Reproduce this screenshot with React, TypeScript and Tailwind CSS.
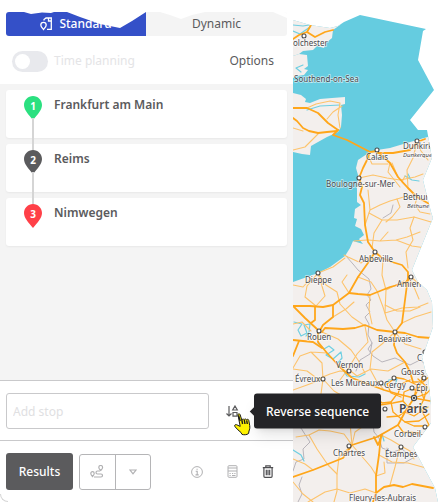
import React, { useState } from 'react';

const stops = [
  { id: 1, name: 'Frankfurt am Main', color: '#2be080' },
  { id: 2, name: 'Reims', color: '#5b5b5d' },
  { id: 3, name: 'Nimwegen', color: '#ff4048' },
];

const majorRoads = [
  // England
  'M293 108L307 108L318 113L328 123L338 130',
  'M293 118L297 121L303 128L309 131L318 133L327 132L337 131',
  'M338 130L333 135L347 140L370 152',
  'M293 39L299 35L307 32L315 37L325 32L333 30M307 32L311 25',
  // Calais and the coast
  'M370 152L377 151L382 156L390 163L398 177L408 188L417 197L433 206',
  'M377 153L393 153L410 150L417 142L425 139',
  'M370 152L367 160L363 168L359 178L362 187L360 195L364 203L365 225L368 242L375 252',
  'M375 252L370 260L358 277L349 293L333 305L323 307L310 306L293 306',
  'M349 293L358 294L370 295L390 287L405 283L411 277',
  'M375 252L382 258L392 262L402 265L408 272L408 277L405 300L402 323L395 332L394 345L397 353L405 362L410 372L413 382',
  'M395 332L405 333L418 337L431 338',
  // Rouen
  'M322 332L325 328L343 329L355 328L365 325L377 330L395 332',
  'M293 306L305 318L318 330L318 342L327 353L340 367L352 378L368 384L384 390L398 394L414 398',
  'M333 305L333 317L323 325L319 332',
  'M293 340L313 342L322 348M299 341L293 356M315 307L315 320L311 323',
  // Paris and the south
  'M293 477L313 470L333 462L343 458L352 445L377 437L398 425L405 412L414 398',
  'M381 435L379 455L376 476L376 493L384 487L394 485L403 487L412 484L433 488',
  'M376 493L373 502M374 437L378 445L382 435',
];

const minorRoads = [
  'M307 108L316 104L330 101L340 103L338 115L340 128M327 119L333 112L342 106',
  'M293 150L305 147L311 141L318 134M293 128L303 131',
  'M359 178L373 175L387 178L400 180L415 177L423 174',
  'M390 163L388 172L400 187M398 177L392 163M405 176L402 182L410 190',
  'M367 153L372 164L388 164M417 142L421 151L428 160M417 142L413 158L407 170L408 188',
  'M368 190L370 210L365 225M370 210L380 205L390 201L397 199L400 207L392 217L386 222',
  'M369 213L382 220L397 220L414 217L431 222M417 197L415 205L420 212L430 214',
  'M397 199L407 196L414 195M414 217L410 228L413 240L406 252L408 268M382 220L374 233L372 248',
  'M368 240L380 241L396 240L407 237L420 232M380 241L388 232M396 240L412 246L426 248',
  'M354 241L367 240M344 255L348 257L361 263L371 256M318 273L326 285L337 292L340 304L352 317L365 326',
  'M318 273L333 267L345 258M318 273L307 286L305 297L316 306L325 296L318 273M293 285L303 287L311 278',
  'M349 293L342 282L347 275M358 277L371 282L377 291L383 307L387 320L395 332',
  'M383 260L382 275L386 290L385 313M386 290L396 285L404 281M385 313L402 308L418 307L428 303',
  'M385 305L397 311L410 311L420 307M411 277L419 284L428 285M408 277L414 287L419 299',
  'M370 295L369 310L372 324M333 317L346 309L354 302M293 324L302 322L311 331M322 332L338 339L351 350L358 360L365 373',
  'M365 326L368 342L357 354L348 369L340 380M395 332L382 344L372 352L370 369L376 380L384 390',
  'M395 332L405 344L421 349M402 323L415 317L431 312M293 369L307 371L318 379L330 374L340 371L351 372',
  'M293 390L307 385L323 379L322 363L311 352L300 356L293 368M311 352L327 353M348 369L357 376L371 369L388 371L405 362',
  'M323 379L334 391L346 398L350 423L352 445M323 379L321 394L306 410L293 419',
  'M352 445L344 434L330 431L319 430L309 435L296 437M352 445L339 457L337 474L337 491L334 502',
  'M352 445L371 467L376 475M337 489L350 493L365 489L376 493M337 489L325 492L308 502M293 482L303 494L313 502',
  'M352 445L355 432L365 425L371 424M381 435L391 440L401 446L410 451L414 459M379 455L392 462L408 463L426 468',
  'M376 476L385 473L384 462M293 459L305 464L313 470M337 474L328 465L317 449L309 435M400 447L395 467L390 485',
];

const parisRing = [
  'M404 392L411 389L421 391L424 399L420 407L409 408L403 401Z',
  'M397 394L391 402L393 412L405 422L419 421L429 414',
  'M414 398L421 383L423 374M414 398L426 394L433 387M414 398L430 401M414 398L417 385L404 379L393 377',
  'M413 382L423 382L430 376M398 394L401 384L410 380M391 402L382 403L375 396',
  'M403 401L393 403L380 405M409 408L399 416L387 417M420 407L427 421L432 431M405 422L414 426L429 426M398 425L403 432L420 433',
  'M395 378L387 384L391 393L401 397M418 379L427 387L424 399M405 412L414 416L428 407',
];

const borders = [
  'M346 256L353 264L358 270L369 279L371 289L367 295L371 300L366 305L370 312L365 317L369 324L368 335L372 343L368 349L373 356L382 362L395 358L410 365L420 360L428 366',
  'M372 343L370 354L360 360L356 371M373 424L374 432L379 438L382 448L393 452L402 449L408 454',
  'M293 424L301 428L306 436L310 442L303 449L304 459L296 462L293 471M302 477L299 485L302 494L298 502M387 448L387 463L404 463L413 458',
  'M393 205L391 213L383 218',
];

const rivers = [
  'M294 322L302 324L298 330L301 336L307 333L304 325L310 324L309 332L306 336',
  'M318 343L324 349L329 346L334 350L326 355L333 359L341 352L342 358L337 364',
  'M343 370L347 376L359 377L365 374M384 385L389 380L397 379L394 388M293 450L301 455L304 461M382 434L384 441',
  'M293 25L303 26L315 24L326 26M293 31L300 34L310 27M307 110L320 106L340 105M293 80L303 77M303 65L296 68L301 72',
  'M405 176L412 180L419 181M408 174L410 178M373 156L380 159',
];

const towns = [
  { x: 304, y: 36 }, { x: 377, y: 150 }, { x: 417, y: 141 }, { x: 359, y: 178 }, { x: 375, y: 252 },
  { x: 318, y: 273 }, { x: 411, y: 277 }, { x: 319, y: 331 }, { x: 395, y: 332 }, { x: 349, y: 371 },
  { x: 323, y: 379 }, { x: 381, y: 383 }, { x: 394, y: 378 }, { x: 412, y: 388 }, { x: 424, y: 378 },
  { x: 349, y: 446 }, { x: 401, y: 447 }, { x: 385, y: 409 }, { x: 425, y: 427 }, { x: 425, y: 352 },
];

const labels = [
  { text: 'olchester', x: 293, y: 46 },
  { text: 'Southend-on-Sea', x: 294, y: 82 },
  { text: 'Calais', x: 366, y: 160 },
  { text: 'Dunkirk', x: 403, y: 149 },
  { text: 'Boulogne-sur-Mer', x: 326, y: 187 },
  { text: 'Bethun', x: 403, y: 200 },
  { text: 'Abbeville', x: 359, y: 262 },
  { text: 'Dieppe', x: 305, y: 283 },
  { text: 'Amien', x: 397, y: 287 },
  { text: 'Rouen', x: 307, y: 340 },
  { text: 'Beauvais', x: 378, y: 342 },
  { text: 'C', x: 417, y: 361 },
  { text: 'Vernon', x: 336, y: 368 },
  { text: 'Gouss', x: 401, y: 375 },
  { text: 'Évreux', x: 295, y: 382 },
  { text: 'Les Mureaux', x: 331, y: 386 },
  { text: 'Cergy', x: 384, y: 388 },
  { text: 'Épi', x: 416, y: 391 },
  { text: 'Corbeil-', x: 394, y: 437 },
  { text: 'Chartres', x: 333, y: 456 },
  { text: 'Étampes', x: 385, y: 457 },
  { text: 'Fleury-les-Aubrais', x: 349, y: 501 },
];

const RouteMap: React.FC = () => (
  <svg
    className="h-full w-full"
    viewBox="293 0 145 502"
    preserveAspectRatio="xMinYMin slice"
    role="img"
    aria-label="Map"
    fontFamily="'Noto Sans', sans-serif"
  >
    <defs>
      <clipPath id="torn-edge">
        <path d="M293 20L310 25L330 28L338 26L344 22L360 15L426 29L423 31L418 60L434 90L410 120L418 130L427 130L432 158L423 180L431 212L433 218L418 255L412 270L418 282L427 290L432 302L433 327L425 350L422 357L426 373L428 376L431 405L431 423L413 447L435 488L438 502H293Z" />
      </clipPath>
    </defs>
    <g clipPath="url(#torn-edge)">
      <rect x="293" width="145" height="502" fill="#65cce0" />
      <g fill="#f3efed">
        <path d="M293 10H346L340 25L333 30L332 38L326 43L324 48L317 46L313 50L303 51L299 54L293 56Z" />
        <path d="M293 56L299 54L307 55L308 66L304 69L308 70L304 75L297 76L293 78Z" />
        <path d="M293 93L301 95L306 99L305 102L310 103L320 99L332 98L345 97L345 104L341 105L342 115L341 127L338 132L327 137L318 142L311 146L310 155L302 154L293 152Z" />
        <path d="M438 134L417 140L400 145L390 148L377 150L370 152L358 160L356 168L358 175L357 185L357 202L361 205L355 209L354 218L357 219L355 226L361 229L364 235L359 239L363 244L353 241L350 248L345 256L330 267L318 273L307 277L293 282V502H438Z" />
      </g>
      <g fill="none" strokeLinejoin="round" strokeLinecap="round">
        <g stroke="#b9b5bb" strokeWidth="1">
          {borders.map((d) => <path key={d} d={d} />)}
        </g>
        <g stroke="#6fcfe2" strokeWidth="1.2">
          {rivers.map((d) => <path key={d} d={d} />)}
        </g>
        <g stroke="#fdc36b" strokeWidth="1.1">
          {minorRoads.map((d) => <path key={d} d={d} />)}
        </g>
        <g stroke="#ffa61a" strokeWidth="1.8">
          {majorRoads.map((d) => <path key={d} d={d} />)}
        </g>
        <g stroke="#ffa61a" strokeWidth="1.3">
          {parisRing.map((d) => <path key={d} d={d} />)}
        </g>
      </g>
      <g fill="#fff" stroke="#4a4a4a" strokeWidth="1.1">
        {towns.map((t) => <circle key={`${t.x}-${t.y}`} cx={t.x} cy={t.y} r="2" />)}
        <circle cx="414" cy="398" r="2.6" />
        <circle cx="414" cy="398" r="0.8" />
      </g>
      <g
        fill="#48484d"
        stroke="#fff"
        strokeOpacity="0.6"
        strokeWidth="1.5"
        paintOrder="stroke"
        fontSize="8"
      >
        {labels.map((l) => <text key={l.text} x={l.x} y={l.y}>{l.text}</text>)}
        <text x="403" y="157" fontSize="6" fontStyle="italic">Dunkerque</text>
        <text x="407" y="208" fontSize="6" fontStyle="italic">Béthune</text>
        <text x="399" y="413" fontSize="12" fontWeight="600">Paris</text>
      </g>
    </g>
  </svg>
);

const StopPin: React.FC<{ id: number; color: string }> = ({ id, color }) => (
  <div className="relative h-6 w-[18px] shrink-0">
    <svg className="absolute inset-0" width="18" height="24" viewBox="0 0 18 24" fill={color}>
      <path d="M9 0C4 0 0 4 0 9c0 5 4.500 9.500 9 15 4.500-5.500 9-10 9-15 0-5-4-9-9-9Z" />
    </svg>
    <span className="relative block text-center text-[10px] leading-5 font-bold text-white">{id}</span>
  </div>
);

const App: React.FC = () => {
  const [timePlanning, setTimePlanning] = useState(false);
  const [newStop, setNewStop] = useState('');

  return (
    <div className="flex h-screen overflow-hidden bg-white font-['Noto_Sans',sans-serif] text-xs text-[#5b5b5d]">
      <aside className="relative flex w-[293px] shrink-0 flex-col">
        <header className="h-[84px] pt-3">
          <div className="relative mx-[6px] flex h-6 overflow-hidden rounded-[3px]">
            <button className="flex w-[140px] items-center justify-center gap-[6px] bg-[#3450c8] font-medium text-white">
              <svg width="13" height="14" viewBox="0 0 13 14" fill="none" stroke="currentColor" strokeWidth="1.3">
                <path d="M4 3.500V2.500L6 1h5.300v11.300H7M8.500 1v3h3" />
                <path d="M3.500 12.500C1.800 10.500.8 9.500.8 8a2.700 2.700 0 0 1 5.400 0c0 1.500-1 2.500-2.700 4.500Z" />
              </svg>
              Standard
            </button>
            <button className="flex-1 bg-[#f4f4f4]">Dynamic</button>
            {/* torn paper edge */}
            <svg className="pointer-events-none absolute inset-0" width="281" height="24" viewBox="6 12 281 24" fill="#fff">
              <path d="M24 12L31 14L42 12.500L51 13L54 12H67L80 17L100 24L120 28L132 21L146 12Z" />
              <path d="M160 12L170 15L181 19L192 15L205 12ZM273 12L287 18V12Z" />
            </svg>
          </div>
          <div className="flex h-12 items-center justify-between pt-[2px] pr-[19px] pl-3">
            <label className="flex items-center gap-[6px] text-[#e4e4e6]">
              <input
                type="checkbox"
                checked={timePlanning}
                onChange={(e) => setTimePlanning(e.target.checked)}
                className="h-[21px] w-9 appearance-none rounded-full bg-[#e8e9ed] p-[3px] before:block before:size-[15px] before:rounded-full before:bg-white checked:bg-[#3450c8] checked:before:ml-auto"
              />
              Time planning
            </label>
            <button>Options</button>
          </div>
        </header>

        <ol className="flex flex-1 flex-col gap-[6px] bg-[#f4f4f4] p-[6px]">
          {stops.map((stop, i) => (
            <li key={stop.id} className="relative flex h-12 gap-3 rounded-[3px] bg-white pt-[6px] pl-[18px] shadow-xs">
              {i < stops.length - 1 && (
                <span className="absolute top-[28px] left-[26px] z-10 h-8 w-[2px] bg-[#d5d5d5]" />
              )}
              <StopPin id={stop.id} color={stop.color} />
              <span className="leading-[18px] font-semibold">{stop.name}</span>
            </li>
          ))}
        </ol>

        <div className="flex items-center border-t border-[#c9c9cb] px-[6px] pt-3 pb-[11px]">
          <input
            type="text"
            aria-label="Add stop"
            placeholder="Add stop"
            value={newStop}
            onChange={(e) => setNewStop(e.target.value)}
            className="h-9 w-[203px] rounded-[3px] border border-[#c9c9cb] px-[6px] placeholder:text-[#e0e0e2]"
          />
          <div className="relative ml-[17px]">
            <button aria-label="Reverse sequence" className="block">
              <svg width="13" height="13" viewBox="0 0 13 13" fill="none" stroke="#5b5b5d" strokeWidth="1.200">
                <path d="M3 1v10M.5 8.500L3 11l2.500-2.500" />
                <path d="M9 1L11.300 5H6.700ZM7 7.500h4v3.700H7Z" />
              </svg>
            </button>
            <div className="absolute top-1/2 left-[28px] z-20 -translate-y-1/2 rounded-[3px] bg-[#242427] px-3 py-2 leading-[19px] font-medium whitespace-nowrap text-white shadow-lg before:absolute before:top-1/2 before:-left-[3px] before:size-[6px] before:-translate-y-1/2 before:rotate-45 before:bg-[#242427]">
              Reverse sequence
            </div>
            {/* mouse pointer */}
            <svg className="pointer-events-none absolute top-[8px] left-[8px] z-30" width="17" height="24" viewBox="0 0 17 24">
              <path
                d="M4 2c-.3-1.300 1.700-1.600 2.100-.4L7.800 7c.5-1.300 2-1.200 2.400-.3.6-1 1.900-.9 2.300.1.800-.9 2.100-.5 2.300.6l.9 5.100c.4 2.500-.1 4-.7 5.500l-.4 2.500c-2 1.500-4.500 1.500-6.600.9l-1-1.900C4.700 18 3.200 16 1.100 13.800c-1.100-1.400.1-2.700 1.400-2.100l3.700 1.700Z"
                fill="#fff200"
                stroke="#1a1a1a"
                strokeWidth="1"
                strokeLinejoin="round"
              />
              <path d="M4.500 2.500l1.700 5.500M7.800 7l.8 4M10.300 7l.7 4M12.700 7.300l.6 3.700" fill="none" stroke="#1a1a1a" strokeWidth="1.400" />
            </svg>
          </div>
        </div>

        <footer className="flex items-center border-t border-[#c9c9cb] px-[6px] py-3">
          <button className="h-[37px] w-[67px] rounded-[3px] bg-[#5b5b5d] font-medium text-white">Results</button>
          <div className="ml-[6px] flex h-9 w-[72px] divide-x divide-[#b5b5b7] rounded-[3px] border border-[#b5b5b7]">
            <button aria-label="Route" className="flex flex-1 items-center justify-center">
              <svg width="14" height="13" viewBox="0 0 14 13" fill="none" stroke="#b0b0b2" strokeWidth="1.200">
                <path d="M2.500 11.500C1.200 10 .8 9.300.8 8.400a1.700 1.700 0 0 1 3.400 0c0 .9-.4 1.600-1.700 3.100ZM10.700 5.500C9.200 4 8.800 3.300 8.800 2.400a1.900 1.900 0 0 1 3.800 0c0 .9-.4 1.600-1.900 3.100Z" />
                <path d="M10 6H7.500a1.500 1.500 0 0 0 0 3H11a1.500 1.500 0 0 1 0 3H4" />
              </svg>
            </button>
            <button aria-label="More" className="flex flex-1 items-center justify-center">
              <svg width="8" height="6" viewBox="0 0 8 6" fill="none" stroke="#b0b0b2" strokeWidth="1.200">
                <path d="M1 1h6L4 4.800Z" />
              </svg>
            </button>
          </div>
          <div className="ml-auto flex items-center gap-6 pr-[13px]">
            <button aria-label="Information">
              <svg width="12" height="12" viewBox="0 0 12 12" fill="none" stroke="#b0b0b2">
                <circle cx="6" cy="6" r="5.400" />
                <path d="M4.700 5.300H6.200V8.800M4.500 8.900h3.200M5.500 3.200h1.200" strokeWidth="1.100" />
              </svg>
            </button>
            <button aria-label="Calculate">
              <svg width="11" height="13" viewBox="0 0 11 13" fill="none" stroke="#b0b0b2">
                <rect x="1" y=".7" width="9" height="11.600" rx="1" />
                <path d="M1 3h9M1 6h9" strokeWidth="1.200" />
                <path d="M2.500 8.500h1.200M5 8.500h1.200M7.300 8.500h1.200M2.500 10.500h1.200M5 10.500h3.500" strokeWidth="1.200" />
              </svg>
            </button>
            <button aria-label="Delete">
              <svg width="12" height="13" viewBox="0 0 12 13" fill="none" stroke="#4f4f52" strokeWidth="1.200">
                <path d="M.8 2.700h10.400M3.800 2.500V.8h4.400v1.700M1.900 3v8.300q0 1 1 1h6.200q1 0 1-1V3M4.300 4.800v5.500M6 4.800v5.500M7.700 4.800v5.500" />
              </svg>
            </button>
          </div>
        </footer>
        <span className="absolute bottom-0 left-0 size-2 rounded-bl-lg border-b border-l border-[#d5d5d5]" />
      </aside>

      <main className="min-w-0 flex-1">
        <RouteMap />
      </main>
    </div>
  );
};

export default App;
